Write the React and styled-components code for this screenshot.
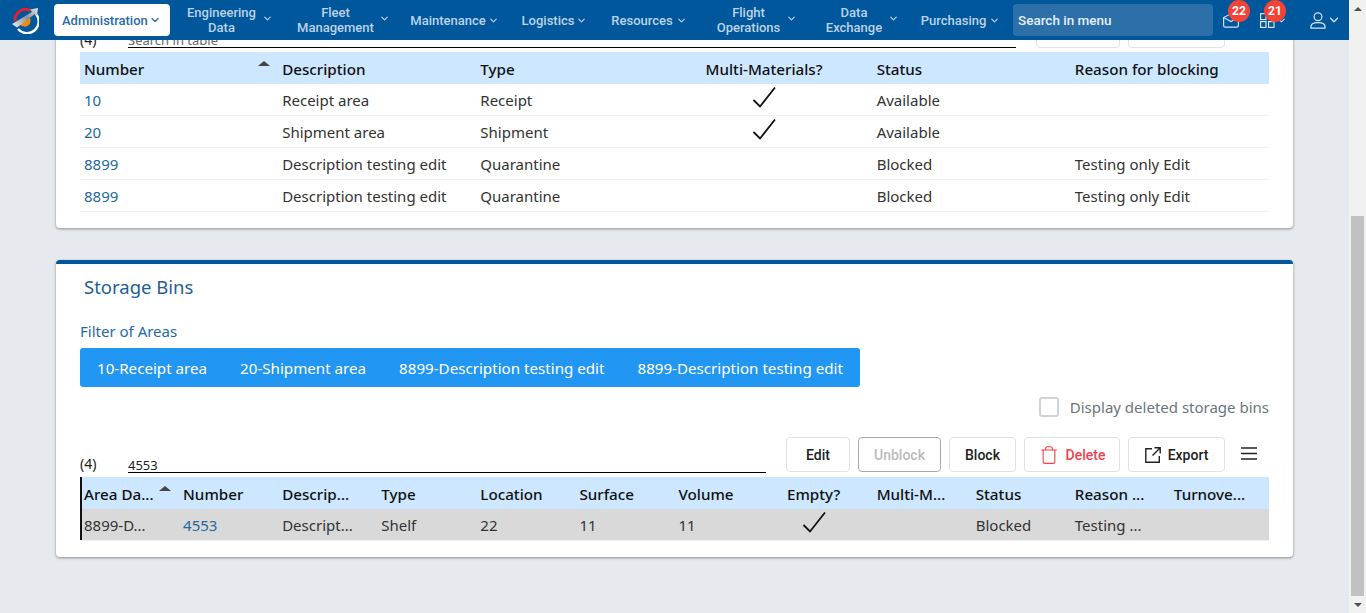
import React from "react";
import styled, { createGlobalStyle } from "styled-components";
import { Trash, ChevronDown } from "lucide-react";

const Global = createGlobalStyle`
  html, body { margin: 0; padding: 0; height: 100%; overflow: hidden; }
  body { background: #e6eaee; font-family: "Noto Sans", "Open Sans", sans-serif; color: #333; }
  * { box-sizing: border-box; }
`;

const Page = styled.div`display: flex; width: 1366px; height: 613px; overflow: hidden;`;
const Column = styled.div`flex: 1; min-width: 0; display: flex; flex-direction: column;`;

const Header = styled.header`
  position: relative; z-index: 2; flex: none; height: 40px; background: #00579c;
  display: flex; align-items: center; padding-left: 11px;
  font-family: Roboto, sans-serif; font-weight: 500; font-size: 13px; color: #bcd2e7;
`;
const Logo = styled.svg`flex: none; width: 28px; height: 28px; margin-right: 15px;`;
const ActiveItem = styled.button`
  flex: none; width: 116px; height: 32px; margin-right: 16px; border: 0; border-radius: 4px; background: #fff;
  color: #2a6aa8; font: inherit; display: flex; align-items: center; padding: 0 0 0 8px; gap: 1px;
`;
const NavItem = styled.button`
  flex: none; margin-right: ${p => p.$after}px; padding: 0; border: 0; background: none; color: inherit; font: inherit;
  display: flex; align-items: center; gap: ${p => p.$gap}px; line-height: 15px; text-align: center;
`;
const NavLabel = styled.span`width: ${p => p.$w}px; white-space: nowrap; display: flex; flex-direction: column; align-items: center;`;
const Chev = styled(ChevronDown)`flex: none; margin: ${p => p.$up ? -4 : 0}px -2px 0;`;
const GridChev = styled(Chev)`margin-left: 1px;`;
const MenuSearch = styled.div`
  flex: none; width: 200px; height: 32px; border-radius: 4px; background: #2d6fa9; color: #e6eef6;
  padding-left: 5px; display: flex; align-items: center; font-size: 13.5px; margin-left: 15px;
`;
const IconSlot = styled.div`position: relative; flex: none; display: flex; align-items: center; margin-left: ${p => p.$ml}px; color: #d5e2ef;`;
const UserChev = styled(ChevronDown)`flex: none; margin-left: 1px;`;
const Badge = styled.span`
  position: absolute; left: ${p => p.$left}px; top: -13px; width: 22px; height: 22px; border-radius: 50%;
  background: #f44336; color: #fff; font-size: 12px; font-weight: 700; display: flex; align-items: center; justify-content: center;
`;

const Content = styled.main`flex: 1; min-height: 0; overflow: hidden; padding: 0 56px; display: flex; flex-direction: column; gap: 32px;`;
const Card = styled.section`
  flex: none; background: #fff; border-radius: 4px; box-shadow: 0 1px 3px rgba(0,0,0,.4); padding: 0 24px 16px;
`;
const ClippedCard = styled(Card)`margin-top: -40px; padding-top: 13px; height: 228px;`;
const StorageCard = styled(Card)`border-top: 4px solid #00579c; height: 297px;`;
const Title = styled.h2`margin: 0 0 0 4px; height: 46px; line-height: 46px; font-size: 18.5px; font-weight: 400; color: #1f5f96;`;
const FilterLabel = styled.div`margin-top: 11px; height: 20px; line-height: 20px; font-size: 15px; color: #1f6aa5;`;
const FilterBar = styled.div`
  margin-top: 7px; display: inline-flex; height: 39px; border-radius: 3px; background: #2196f3; padding: 0 0.5px;
`;
const FilterBtn = styled.button`
  padding: 0 16.5px; border: 0; background: none; color: #fff; font: inherit; font-size: 15.15px; white-space: nowrap;
`;
const CheckRow = styled.label`display: flex; justify-content: flex-end; align-items: center; gap: 11px; margin-top: 10px; height: 20px; color: #6c757d; font-size: 15px;`;
const CheckBox = styled.span`width: 20px; height: 20px; border: 2px solid #ced4da; border-radius: 3px;`;

const Toolbar = styled.div`display: flex; align-items: flex-end; height: 35px; margin-top: ${p => p.$mt || 0}px;`;
const Count = styled.span`flex: none; width: 48px; font-size: 14px; line-height: 17px; color: #222;`;
const SearchField = styled.div`
  flex: none; width: ${p => p.$w}px; height: 20px; margin-bottom: ${p => p.$drop || 0}px; border-bottom: 1px solid #000;
  font-size: 13px; line-height: 24px;
  color: ${p => p.$muted ? "#666" : "#222"};
`;
const Actions = styled.div`display: flex; gap: 8px; margin-left: ${p => p.$ml}px; align-items: center;`;
const ActionBtn = styled.button`
  height: 35px; width: ${p => p.$w}px; padding: 0; background: #fff; border-radius: 4px;
  border: 1px solid ${p => p.$disabled ? "#aaa" : "#e2e2e2"};
  color: ${p => p.$disabled ? "#bbb" : p.$danger ? "#f5414b" : "#222"};
  font-family: Roboto, sans-serif; font-weight: 500; font-size: 14px;
  display: flex; align-items: center; justify-content: center; gap: 7px;
`;
const Burger = styled.svg`margin-left: 8px; flex: none; margin-top: -2px;`;

const Table = styled.table`
  width: 100%; margin-top: ${p => p.$mt}px; border-collapse: separate; border-spacing: 0; table-layout: fixed; font-size: 15px;
`;
const Th = styled.th`
  position: relative; height: 32px; padding: 2px ${p => p.$center ? 23 : 4}px 0 4px; background: #cce7ff; color: #111; font-weight: 500; font-size: 15.2px;
  text-align: ${p => p.$center ? "center" : "left"}; white-space: nowrap;
  ${p => p.$marked ? "box-shadow: inset 2px 0 0 #111;" : ""}
`;
const SortMark = styled.span`
  position: absolute; right: 8px; top: 9px; width: 0; height: 0;
  border: 6px solid transparent; border-top: 0; border-bottom: 5px solid #444;
`;
const Tr = styled.tr`background: ${p => p.$selected ? "#d9d9d9" : "transparent"};`;
const Td = styled.td`
  height: 32px; padding: 1px ${p => p.$center ? 23 : 4}px 0 4px; border-bottom: 1px solid #f0f0f0; white-space: nowrap;
  color: ${p => p.$link ? "#22699f" : "#333"}; text-align: ${p => p.$center ? "center" : "left"};
  ${p => p.$marked ? "box-shadow: inset 2px 0 0 #111;" : ""}
`;
const CheckSvg = styled.svg`display: block; margin: -7px auto 0;`;

const Scrollbar = styled.aside`flex: none; width: 17px; height: 613px; background: #f1f1f1; display: flex; flex-direction: column; align-items: center;`;
const ArrowBox = styled.div`flex: none; height: 17px; display: flex; align-items: center; justify-content: center;`;
const ArrowUp = styled.span`width: 0; height: 0; border: 4px solid transparent; border-top: 0; border-bottom: 4px solid #505050;`;
const ArrowDown = styled.span`width: 0; height: 0; border: 4px solid transparent; border-bottom: 0; border-top: 4px solid #505050;`;
const Thumb = styled.div`flex: none; width: 13px; height: 380px; margin-top: 199px; background: #c1c1c1;`;
const Track = styled.div`flex: 1;`;

const Check = () => (
  <CheckSvg width="24" height="22" viewBox="0 0 24 22" fill="none" stroke="#111" strokeWidth="1.8">
    <path d="M1.5 14 8 20.5 23 1.5" />
  </CheckSvg>
);

const nav = [
  { lines: ["Engineering", "Data"], w: 71, gap: 7, after: 25, up: true },
  { lines: ["Fleet", "Management"], w: 79, gap: 6, after: 22, up: true },
  { lines: ["Maintenance"], w: 76, gap: 4, after: 25 },
  { lines: ["Logistics"], w: 52, gap: 4, after: 25 },
  { lines: ["Resources"], w: 64, gap: 4, after: 31 },
  { lines: ["Flight", "Operations"], w: 65, gap: 7, after: 29, up: true },
  { lines: ["Data", "Exchange"], w: 60, gap: 6, after: 23, up: true },
  { lines: ["Purchasing"], w: 67, gap: 4, after: 0 },
];

const areaRows = [
  ["10", "Receipt area", "Receipt", true, "Available", ""],
  ["20", "Shipment area", "Shipment", true, "Available", ""],
  ["8899", "Description testing edit", "Quarantine", false, "Blocked", "Testing only Edit"],
  ["8899", "Description testing edit", "Quarantine", false, "Blocked", "Testing only Edit"],
];
const binHead = ["Area Da...", "Number", "Descrip...", "Type", "Location", "Surface", "Volume", "Empty?", "Multi-M...", "Status", "Reason ...", "Turnove..."];
const binRow = ["8899-D...", "4553", "Descript...", "Shelf", "22", "11", "11", "", "", "Blocked", "Testing ...", ""];

export default function App() {
  return (
    <Page>
      <Global />
      <Column>
        <Header>
          <Logo viewBox="0 0 28 28" fill="none">
            <defs>
              <linearGradient id="steel" x1="0" y1="1" x2="1" y2="0">
                <stop offset="0" stopColor="#f2f2f2" />
                <stop offset="0.55" stopColor="#8d9297" />
                <stop offset="1" stopColor="#e4e6e8" />
              </linearGradient>
            </defs>
            <path d="M4 15A10.5 10.5 0 0 1 19 4.5" stroke="#e3202e" strokeWidth="3" />
            <path d="M25 8A11 11 0 0 1 7 23" stroke="#fff" strokeWidth="2.4" />
            <path d="M9 18.5 19 12a6 6 0 0 1-10 6.5z" fill="#f08a12" />
            <path d="M1 18 21 6l-2-2.5 8-1.5-1 8-2-2L6 21.5z" fill="url(#steel)" />
          </Logo>
          <ActiveItem>Administration<ChevronDown size={12} strokeWidth={2.5} /></ActiveItem>
          {nav.map(n => (
            <NavItem key={n.lines[0]} $gap={n.gap} $after={n.after}>
              <NavLabel $w={n.w}>{n.lines.map(l => <span key={l}>{l}</span>)}</NavLabel>
              <Chev size={11} strokeWidth={2.5} $up={n.up} />
            </NavItem>
          ))}
          <MenuSearch>Search in menu</MenuSearch>
          <IconSlot $ml={10}>
            <svg width="16" height="15" viewBox="0 0 16 15" fill="none" stroke="currentColor" strokeWidth="1.2">
              <path d="M.6 4.5v8a1.6 1.6 0 0 0 1.6 1.6h11.6a1.6 1.6 0 0 0 1.6-1.6v-8M.6 4.5l7.4 4 7.4-4L8 .8z" />
            </svg>
            <Badge $left={5}>22</Badge>
          </IconSlot>
          <IconSlot $ml={21}>
            <svg width="15" height="15" viewBox="0 0 15 15" fill="none" stroke="currentColor" strokeWidth="1.2">
              <rect x=".6" y=".6" width="5.4" height="6" /><rect x=".6" y="8.6" width="5.4" height="5.8" /><rect x="8.6" y="8.6" width="5.4" height="5.8" />
            </svg>
            <GridChev size={11} strokeWidth={2.2} />
            <Badge $left={4}>21</Badge>
          </IconSlot>
          <IconSlot $ml={25}>
            <svg width="16" height="17" viewBox="0 0 16 17" fill="none" stroke="currentColor" strokeWidth="1.25">
              <circle cx="8" cy="4.8" r="3.9" />
              <path d="M1 16v-1.5c0-2.6 2.6-4 7-4s7 1.4 7 4V16z" />
            </svg>
            <UserChev size={14} strokeWidth={2.2} />
          </IconSlot>
        </Header>
        <Content>
          <ClippedCard>
            <Toolbar>
              <Count>(4)</Count>
              <SearchField $w={888} $muted>Search in table</SearchField>
              <Actions $ml={20}>
                <ActionBtn $w={84} />
                <ActionBtn $w={97} />
              </Actions>
            </Toolbar>
            <Table $mt={4}>
              <thead>
                <tr>
                  <Th>Number<SortMark /></Th>
                  <Th>Description</Th><Th>Type</Th><Th $center>Multi-Materials?</Th><Th>Status</Th><Th>Reason for blocking</Th>
                </tr>
              </thead>
              <tbody>
                {areaRows.map((r, i) => (
                  <Tr key={i}>
                    <Td $link>{r[0]}</Td><Td>{r[1]}</Td><Td>{r[2]}</Td>
                    <Td $center>{r[3] && <Check />}</Td>
                    <Td>{r[4]}</Td><Td>{r[5]}</Td>
                  </Tr>
                ))}
              </tbody>
            </Table>
          </ClippedCard>
          <StorageCard>
            <Title>Storage Bins</Title>
            <FilterLabel>Filter of Areas</FilterLabel>
            <FilterBar>
              <FilterBtn>10-Receipt area</FilterBtn>
              <FilterBtn>20-Shipment area</FilterBtn>
              <FilterBtn>8899-Description testing edit</FilterBtn>
              <FilterBtn>8899-Description testing edit</FilterBtn>
            </FilterBar>
            <CheckRow><CheckBox />Display deleted storage bins</CheckRow>
            <Toolbar $mt={20}>
              <Count>(4)</Count>
              <SearchField $w={638} $drop={-1}>4553</SearchField>
              <Actions $ml={20}>
                <ActionBtn $w={64}>Edit</ActionBtn>
                <ActionBtn $w={83} $disabled>Unblock</ActionBtn>
                <ActionBtn $w={67}>Block</ActionBtn>
                <ActionBtn $w={96} $danger><Trash size={20} strokeWidth={1.3} />Delete</ActionBtn>
                <ActionBtn $w={97}>
                  <svg width="16" height="16" viewBox="0 0 16 16" fill="none" stroke="#222" strokeWidth="1.4">
                    <path d="M7 1.7H.8v13.5h13.5V9M9.5.8h5.7v5.7M15 1 7.5 8.5" />
                  </svg>
                  Export
                </ActionBtn>
                <Burger width="16" height="13" viewBox="0 0 16 13" stroke="#222" strokeWidth="1.5">
                  <path d="M0 1h16M0 6.5h16M0 12h16" />
                </Burger>
              </Actions>
            </Toolbar>
            <Table $mt={5}>
              <thead>
                <tr>
                  {binHead.map((h, i) => <Th key={h} $marked={i === 0} $center={i === 7}>{h}{i === 0 && <SortMark />}</Th>)}
                </tr>
              </thead>
              <tbody>
                <Tr $selected>
                  {binRow.map((c, i) => (
                    <Td key={i} $marked={i === 0} $link={i === 1} $center={i === 7}>{i === 7 ? <Check /> : c}</Td>
                  ))}
                </Tr>
              </tbody>
            </Table>
          </StorageCard>
        </Content>
      </Column>
      <Scrollbar>
        <ArrowBox><ArrowUp /></ArrowBox>
        <Thumb />
        <Track />
        <ArrowBox><ArrowDown /></ArrowBox>
      </Scrollbar>
    </Page>
  );
}
